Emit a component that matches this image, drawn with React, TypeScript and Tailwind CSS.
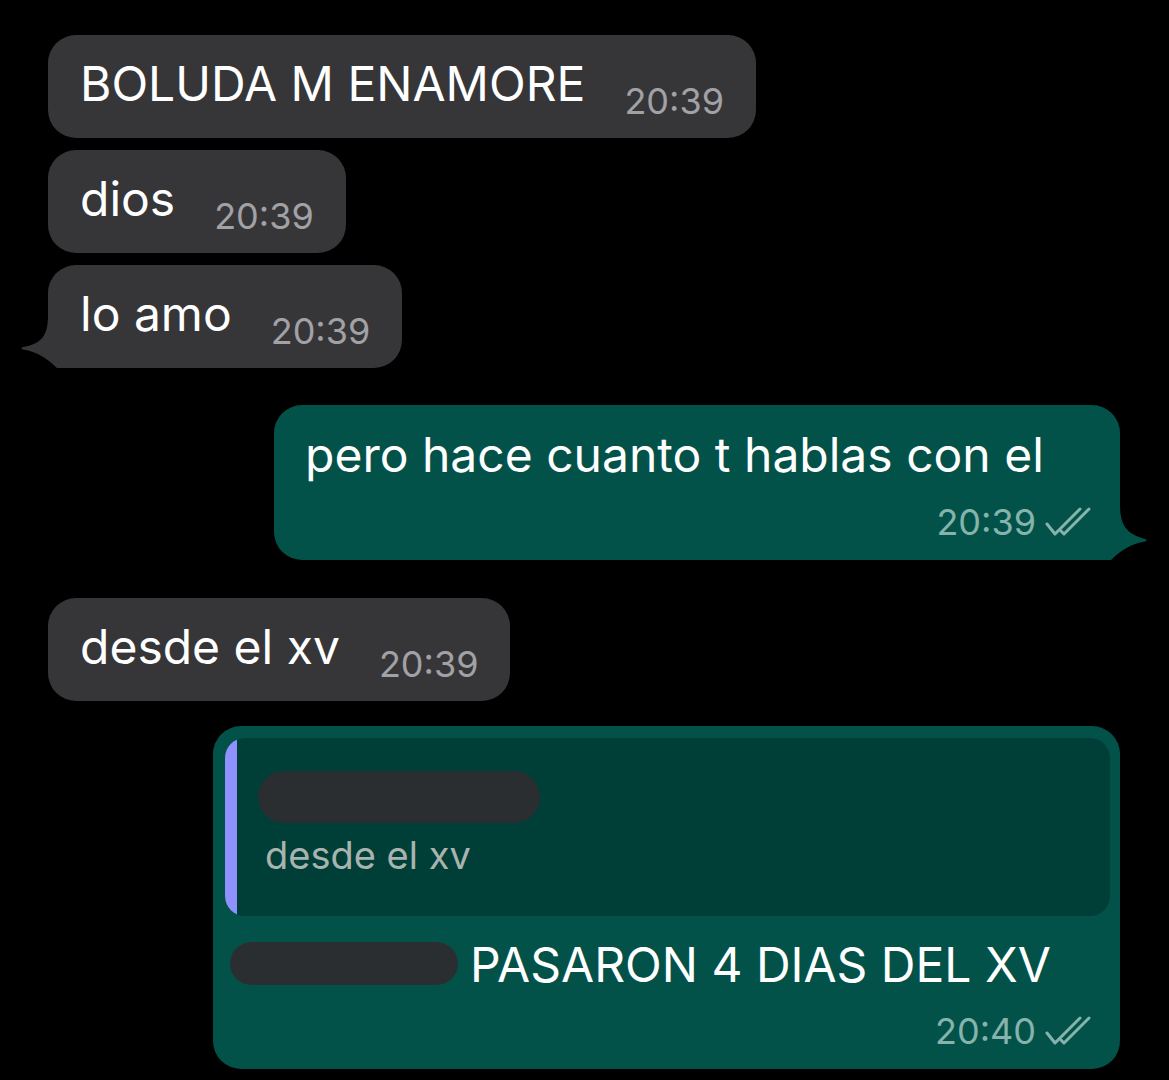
import React from 'react';

const font = { fontFamily: 'Inter, "Noto Sans", sans-serif' };

function Checks() {
  return (
    <svg width="48" height="32" viewBox="0 0 48 32" fill="none" className="shrink-0">
      <path d="M3 18 L11 28 L36 3" stroke="#86b3ab" strokeWidth="3" strokeLinecap="round" strokeLinejoin="round" />
      <path d="M17 25 L20 28 L45 3" stroke="#86b3ab" strokeWidth="3" strokeLinecap="round" strokeLinejoin="round" />
    </svg>
  );
}

function GrayBubble({ text, time, tail }: { text: string; time: string; tail?: boolean }) {
  return (
    <div className="relative self-start flex items-start bg-[#363638] rounded-[28px] pl-[32px] pr-[32px] pt-[21px] pb-[17px]">
      {tail && (
        <svg className="absolute left-[-27px] bottom-0" width="60" height="52" viewBox="0 0 60 52">
          <path d="M27 0 C27 20 20 28 2 31 C0 31.5 0 33 2 33.5 C16 36 26 42 36 52 L60 52 L60 0 Z" fill="#363638" />
        </svg>
      )}
      <span className="relative text-[48px] leading-[56px] text-white">{text}</span>
      <span className="relative ml-[39px] mt-[25px] text-[36px] leading-[40px] text-[#a1a1a6]">{time}</span>
    </div>
  );
}

export default function App() {
  return (
    <div className="min-h-screen bg-black pt-[35px] pl-[48px] pr-[49px] flex flex-col" style={font}>
      <GrayBubble text="BOLUDA M ENAMORE" time="20:39" />
      <div className="h-[12px]" />
      <GrayBubble text="dios" time="20:39" />
      <div className="h-[12px]" />
      <GrayBubble text="lo amo" time="20:39" tail />

      <div className="relative self-end mt-[37px] w-[846px] bg-[#02524a] rounded-[28px] pl-[31px] pr-[28px] pt-[22px] pb-[18px]">
        <svg className="absolute right-[-27px] bottom-0" width="60" height="56" viewBox="0 0 60 56">
          <path d="M33 0 C33 22 40 30 58 35 C60 35.5 60 37 58 37.5 C44 40 34 46 24 56 L0 56 L0 0 Z" fill="#02524a" />
        </svg>
        <div className="relative text-[48px] leading-[56px] text-white">pero hace cuanto t hablas con el</div>
        <div className="relative mt-[19px] flex items-center justify-end gap-[8px]">
          <span className="text-[36px] leading-[40px] text-[#86b3ab]">20:39</span>
          <Checks />
        </div>
      </div>

      <div className="self-start mt-[38px]">
        <GrayBubble text="desde el xv" time="20:39" />
      </div>

      <div className="self-end mt-[25px] w-[907px] bg-[#02524a] rounded-[28px] pl-[12px] pr-[10px] pt-[12px] pb-[18px]">
        <div className="flex h-[178px] rounded-[20px] overflow-hidden bg-[#003f37]">
          <div className="w-[12px] bg-[#8f91ff]" />
          <div className="pl-[21px] pt-[33px]">
            <div className="h-[52px] w-[282px] rounded-full bg-[#2b2e31]" />
            <div className="mt-[12px] pl-[7px] text-[38px] leading-[40px] text-[#a9b3b0]">desde el xv</div>
          </div>
        </div>
        <div className="mt-[21px] flex items-start pl-[5px]">
          <div className="mt-[5px] h-[43px] w-[228px] rounded-full bg-[#2b2e31]" />
          <span className="ml-[12px] text-[48px] leading-[56px] text-white">PASARON 4 DIAS DEL XV</span>
        </div>
        <div className="mt-[18px] pr-[18px] flex items-center justify-end gap-[8px]">
          <span className="text-[36px] leading-[40px] text-[#86b3ab]">20:40</span>
          <Checks />
        </div>
      </div>
    </div>
  );
}
